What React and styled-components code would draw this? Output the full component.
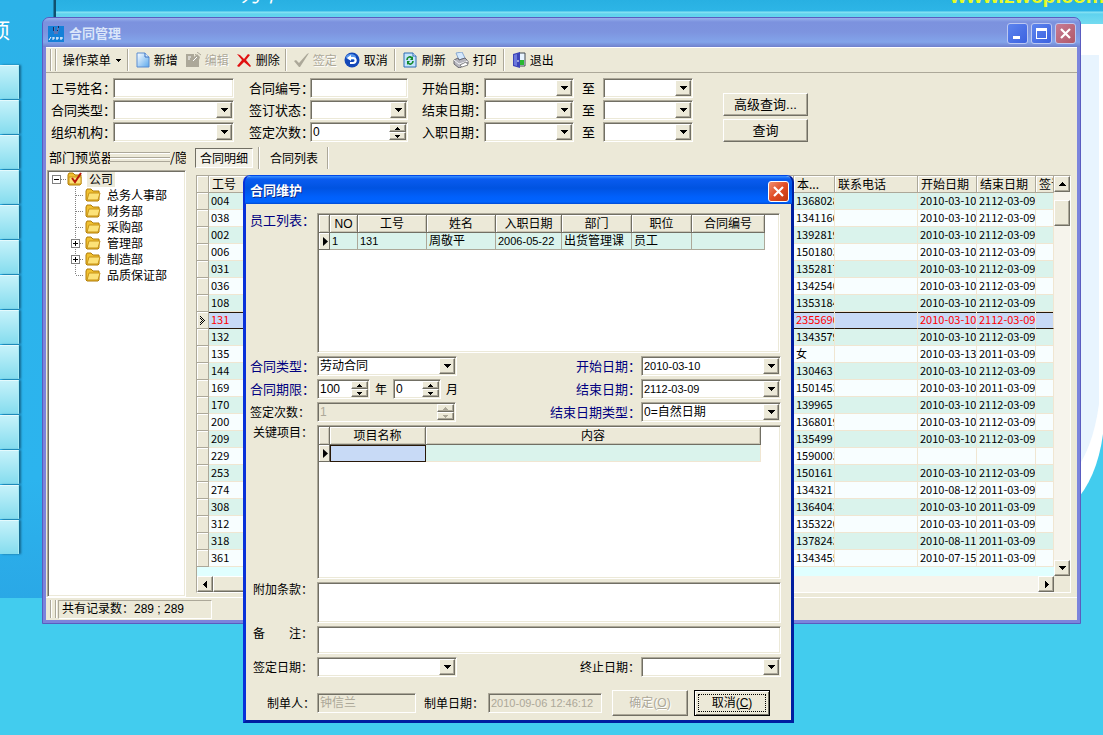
import React from "react";
import styled, { createGlobalStyle, css } from "styled-components";

const face = "#ece9d8";
const cjk = '"Noto Sans CJK SC", sans-serif';
const mixed = '"Liberation Sans", "Noto Sans CJK SC", sans-serif';

const Global = createGlobalStyle`
  *, *::before, *::after { box-sizing: border-box; }
  html, body { margin: 0; padding: 0; }
  body { font-family: ${cjk}; font-size: 12px; line-height: 16px; color: #000; }
  button, input, select, textarea { font: inherit; color: inherit; margin: 0; padding: 0; border-radius: 0; }
  ul { list-style: none; margin: 0; padding: 0; }
`;

const raised = css`
  background: ${face};
  border: 1px solid;
  border-color: #fff #716f64 #716f64 #fff;
  box-shadow: inset -1px -1px #aca899;
`;

const sunken = css`
  background: #fff;
  padding: 1px;
  border: 1px solid;
  border-color: #aca899 #fff #fff #aca899;
  box-shadow: inset 1px 1px #716f64, inset -1px -1px ${face};
`;

/* ---------- desktop ---------- */

const Desktop = styled.div`
  position: relative;
  height: 100vh;
  overflow: hidden;
  background: #42ccee;
`;

const Banner = styled.header`
  display: flex;
  justify-content: space-between;
  height: 24px;
  padding-left: 57px;
  overflow: hidden;
  background: linear-gradient(#28b0e2 0, #2db5e6 11px, #8ce4f4 12px, #5fd2ee 14px, #72daf0 23px);
  white-space: nowrap;
`;

const BannerWord = styled.span`
  margin: -18px 0 0 184px;
  font-size: 20px;
  line-height: 24px;
  font-style: italic;
  color: #fff;
`;

const BannerLink = styled.a`
  width: 153px;
  flex: none;
  margin-top: -16px;
  font: 700 21px/24px "Liberation Sans", sans-serif;
  color: #e6fa28;
  text-decoration: none;
`;

const SideRail = styled.nav`
  position: absolute;
  left: 0;
  top: 0;
  width: 56px;
  height: 598px;
  overflow: hidden;
  background: linear-gradient(90deg, transparent 53px, #10506e 54px), linear-gradient(#2cb2e8, #2cb4ee 80%, #2aa8e6);
`;

const RailTitle = styled.div`
  width: 20px;
  margin: 14px 0 0 -11px;
  height: 51px;
  font-size: 21px;
  line-height: 30px;
  color: #fff;
`;

const RailItem = styled.div`
  width: 19px;
  height: 34px;
  margin-bottom: 1px;
  border-top: 1px solid #e4fafd;
  border-right: 1px solid #a8ecf6;
  background: linear-gradient(#c6f2fa, #84dcee);
  box-shadow: 2px 0 2px #14668c;
`;

const Sky = styled.svg`
  position: absolute;
  right: 0;
  top: 24px;
  width: 30px;
  height: 500px;
`;

/* ---------- window chrome ---------- */

const Window = styled.section`
  position: absolute;
  display: flex;
  flex-direction: column;
  border-radius: 7px 7px 0 0;
  ${(p) =>
    p.$active
      ? css`
          left: 243px;
          right: 309px;
          top: 175px;
          border: 3px solid;
          border-color: #0048e8 #001ea0 #001ea0 #0831d9;
          border-top-width: 1px;
          background: ${face};
        `
      : css`
          left: 42px;
          right: 22px;
          top: 17px;
          border: 1px solid #5a5cc0;
          padding: 0 3px 3px;
          background: #7b84dc;
        `}
`;

const TitleBar = styled.div`
  display: flex;
  align-items: center;
  height: ${(p) => (p.$active ? 28 : 29)}px;
  gap: 3px;
  border-radius: 6px 6px 0 0;
  margin: 0 ${(p) => (p.$active ? -1 : -3)}px;
  padding: 2px ${(p) => (p.$active ? 3 : 4)}px 0 5px;
  background: ${(p) =>
    p.$active
      ? "linear-gradient(#3a90ff 0, #0a5cf0 3px, #0053e1 12px, #0060fc 21px, #0064ff 26px, #0048d0 28px)"
      : "linear-gradient(#98b0ec 0, #7c92de 4px, #7d94df 14px, #82a4ea 24px, #7080cc 29px)"};
`;

const TitleText = styled.h1`
  flex: 1;
  margin: 0;
  padding-left: ${(p) => (p.$active ? 0 : 2)}px;
  font-size: 13px;
  line-height: 18px;
  padding-bottom: 2px;
  font-weight: 700;
  color: ${(p) => (p.$active ? "#fff" : "#dbe6fa")};
  text-shadow: ${(p) => (p.$active ? "1px 1px #0a2c8c" : "none")};
`;

const CaptionButton = styled.button`
  display: grid;
  place-items: center;
  width: 21px;
  height: 21px;
  border: 1px solid ${(p) => (p.$tone === "live" ? "#fff" : "#bcc8f2")};
  border-radius: 3px;
  background: ${(p) =>
    p.$tone === "live"
      ? "linear-gradient(135deg, #f09070, #e04c24 50%, #c03810)"
      : p.$tone === "close"
      ? "linear-gradient(135deg, #c87c94, #b05868)"
      : "linear-gradient(135deg, #5c84ee, #3c62e0)"};
`;

const CrossIcon = () => (
  <svg width="13" height="13" viewBox="0 0 13 13" aria-hidden="true">
    <path d="M2 2L11 11M11 2L2 11" stroke="#fff" strokeWidth="2.2" />
  </svg>
);

/* ---------- toolbar ---------- */

const Toolbar = styled.div`
  display: flex;
  align-items: center;
  height: 26px;
  padding: 0 4px;
  background: ${face};
  border-top: 1px solid #fff;
  border-bottom: 1px solid #aca899;
`;

const Grip = styled.span`
  width: 6px;
  height: ${(p) => p.$h}px;
  flex: none;
  border: solid #aca899;
  border-width: 0 1px;
  box-shadow: inset 1px 0 #fff, 1px 0 #fff;
`;

const ToolButton = styled.button`
  display: flex;
  align-items: center;
  gap: ${(p) => p.$gap || 4}px;
  padding: 0 3px 0 4px;
  border: 0;
  background: none;
  white-space: nowrap;
  line-height: 14px;
  color: ${(p) => (p.disabled ? "#aca899" : "#000")};
  text-shadow: ${(p) => (p.disabled ? "1px 1px #fff" : "none")};
`;

const Divider = styled.span`
  width: 2px;
  height: 22px;
  margin: 0 ${(p) => p.$m}px;
  flex: none;
  border-left: 1px solid #aca899;
  border-right: 1px solid #fff;
`;

/* ---------- fields ---------- */

const FieldBox = styled.span`
  display: flex;
  height: 20px;
  width: ${(p) => (p.$w ? p.$w + "px" : "100%")};
  flex: none;
  ${sunken}
  ${(p) => p.$off && css`background: ${face}; color: #aca899;`}
`;

const bare = css`
  appearance: none;
  flex: 1;
  min-width: 0;
  width: 100%;
  height: 16px;
  border: 0;
  outline: 0;
  background: none;
  padding: 0 1px;
  font-family: ${mixed};
  font-size: ${(p) => p.$size || 12}px;
  line-height: 16px;
`;
const BareInput = styled.input`
  ${bare}
  &:disabled { color: #aca899; }
`;
const BareSelect = styled.select`${bare}`;

const ArrowBox = styled.span`
  display: grid;
  place-items: center;
  width: 16px;
  height: 16px;
  flex: none;
  ${raised}
`;

const SpinBox = styled.span`
  display: grid;
  grid-template-rows: 8px 8px;
  width: 17px;
  flex: none;
`;

const SpinButton = styled.button`
  display: grid;
  place-items: center;
  width: 17px;
  height: 8px;
  ${raised}
`;

const ARROWS = { down: "M0 0h7L3.5 4z", up: "M0 4h7L3.5 0z", left: "M5 0v7L1 3.5z", right: "M2 0v7l4-3.5z" };
const Arrow = ({ dir = "down", w = 7, h, color = "#000" }) => {
  const sideways = dir === "left" || dir === "right";
  return (
    <svg width={w} height={h || (sideways ? 7 : 4)} viewBox={sideways ? "0 0 7 7" : "0 0 7 4"} aria-hidden="true">
      <path d={ARROWS[dir]} fill={color} shapeRendering="crispEdges" />
    </svg>
  );
};

const Combo = ({ id, w, value = "", size, label }) => (
  <FieldBox $w={w}>
    <BareSelect id={id} aria-label={label} $size={size} defaultValue={value}>
      <option value={value}>{value}</option>
    </BareSelect>
    <ArrowBox>
      <Arrow />
    </ArrowBox>
  </FieldBox>
);

const Spinner = ({ id, w, value, disabled }) => (
  <FieldBox $w={w} $off={disabled}>
    <BareInput id={id} defaultValue={value} disabled={disabled} />
    <SpinBox>
      <SpinButton type="button" aria-label="+" disabled={disabled}>
        <Arrow dir="up" w={5} h={3} color={disabled ? "#aca899" : "#000"} />
      </SpinButton>
      <SpinButton type="button" aria-label="-" disabled={disabled}>
        <Arrow w={5} h={3} color={disabled ? "#aca899" : "#000"} />
      </SpinButton>
    </SpinBox>
  </FieldBox>
);

const TextField = ({ id, w, value, disabled, size }) => (
  <FieldBox $w={w} $off={disabled}>
    <BareInput id={id} defaultValue={value} disabled={disabled} $size={size} />
  </FieldBox>
);

const PushButton = styled.button`
  height: ${(p) => p.$h || 23}px;
  width: ${(p) => p.$w || 85}px;
  flex: none;
  font-size: ${(p) => p.$size || 13}px;
  font-family: ${mixed};
  line-height: 16px;
  ${raised}
  &:disabled { color: #aca899; text-shadow: 1px 1px #fff; }
  ${(p) =>
    p.$focused &&
    css`
      border-color: #000;
      box-shadow: inset 1px 1px #fff, inset -1px -1px #716f64;
      outline: 1px dotted #000;
      outline-offset: -5px;
    `}
`;

/* ---------- filter area ---------- */

const FilterPanel = styled.form`
  display: flex;
  height: 73px;
  padding: 5px 5px 0;
  background: ${face};
`;

const FilterGroup = styled.div`
  display: grid;
  grid-template-columns: ${(p) => p.$cols};
  grid-auto-rows: 20px;
  row-gap: 2px;
  align-content: start;
  align-items: center;
  margin-right: ${(p) => p.$mr || 0}px;
`;

const FilterLabel = styled.label`
  font-size: 13px;
  line-height: 20px;
  white-space: nowrap;
  text-align: ${(p) => (p.$center ? "center" : "left")};
`;

const FilterActions = styled.div`
  display: flex;
  flex-direction: column;
  gap: 3px;
  padding-top: 15px;
`;

/* ---------- work area ---------- */

const WorkArea = styled.div`
  display: flex;
  background: ${face};
`;

const LeftPane = styled.aside`
  width: 140px;
  flex: none;
  display: flex;
  flex-direction: column;
`;

const PaneHead = styled.div`
  display: flex;
  align-items: center;
  height: 24px;
  padding: 0 0 2px 3px;
  font-size: 13px;
  white-space: nowrap;
`;

const Clip = styled.span`
  width: ${(p) => p.$w}px;
  overflow: hidden;
  flex: none;
`;

const DoubleBar = styled.span`
  width: 60px;
  height: 10px;
  flex: none;
  border: solid #aca899;
  border-width: 1px 0;
  background: linear-gradient(#fff 1px, transparent 1px 4px, #aca899 4px 5px, #fff 5px 6px, transparent 6px);
`;

const TreeBox = styled.div`
  flex: 1;
  margin-left: 1px;
  ${sunken}
  padding: 0 1px;
`;

const TreeRow = styled.li`
  display: flex;
  align-items: center;
  height: 16px;
`;

const TreeStem = styled.span`
  display: flex;
  align-items: center;
  height: 16px;
  flex: none;
  width: ${(p) => (p.$root ? 18 : 36)}px;
  padding-left: ${(p) => (p.$root ? 3 : 22)}px;
  background:
    repeating-linear-gradient(90deg, #808080 0 1px, transparent 1px 2px) ${(p) => (p.$root ? 12 : 27)}px 8px / 8px 1px no-repeat,
    repeating-linear-gradient(#808080 0 1px, transparent 1px 2px) 26px 0 / 1px ${(p) => (p.$root ? 0 : p.$last ? 8 : 16)}px no-repeat;
`;

const Toggle = styled.button`
  display: grid;
  place-items: center;
  width: 9px;
  height: 9px;
  border: 1px solid #808080;
  background: #fff;
`;

const TreeText = styled.span`
  height: 15px;
  margin-left: 4px;
  padding: 0 2px;
  line-height: 14px;
  background: ${(p) => (p.$lit ? face : "none")};
`;

const RightPane = styled.div`
  flex: 1;
  min-width: 0;
  padding: 0 6px 4px 10px;
`;

const Tabs = styled.div`
  display: flex;
  align-items: center;
  height: 29px;
  padding-bottom: 5px;
  margin-left: -1px;
`;

const Tab = styled.button`
  height: 20px;
  width: 58px;
  border: 1px solid transparent;
  background: none;
  line-height: 16px;
  ${(p) =>
    p.$on &&
    css`
      border-color: #716f64 #fff #fff #716f64;
      background: #f4f2e8;
    `}
`;

const GridFrame = styled.div`
  display: grid;
  grid-template-columns: minmax(0, 1fr) 16px;
  grid-template-rows: auto 16px;
  border: 1px solid;
  border-color: #aca899 #fff #fff #aca899;
`;

const GridBody = styled.div`
  padding-bottom: 9px;
  background: #e0ffff;
`;

const RecordTable = styled.table`
  width: 100%;
  table-layout: fixed;
  border-collapse: separate;
  border-spacing: 0;
  font-size: 11px;
  line-height: 14px;
`;

const RecordHead = styled.th`
  height: 17px;
  padding: 0 0 0 3px;
  text-align: left;
  font-size: 12px;
  font-weight: 400;
  white-space: nowrap;
  overflow: hidden;
  background: ${face};
  border-right: 1px solid #aca899;
  border-bottom: 1px solid #aca899;
  box-shadow: inset 1px 1px #fff;
`;

const RecordRow = styled.tr`
  background: ${(p) => (p.$sel ? "#c8daf6" : p.$odd ? "#f8feff" : "#daf3ec")};
  color: ${(p) => (p.$sel ? "#f00" : "#000")};
  td {
    height: 17px;
    padding: 0 0 2px 2px;
    vertical-align: top;
    white-space: nowrap;
    overflow: hidden;
    border-right: 1px solid #f0e6d2;
    border-bottom: 1px solid ${(p) => (p.$sel ? "#281808" : "#f0e6d2")};
    box-shadow: ${(p) => (p.$sel ? "inset 0 1px #281808" : "none")};
  }
  td:first-child {
    background: ${face};
    border-right: 1px solid #aca899;
    border-bottom: 1px solid #aca899;
    box-shadow: inset 1px 1px #fff;
    padding: 0 0 0 3px;
    vertical-align: middle;
    line-height: 8px;
  }
`;

const VScroll = styled.div`
  display: flex;
  flex-direction: column;
  justify-content: space-between;
  background: #f6f4ec;
`;

const VThumb = styled.span`
  height: 26px;
  margin: 8px 0 auto;
  ${raised}
`;

const HScroll = styled.div`
  display: flex;
  justify-content: space-between;
  background: #f6f4ec;
`;

const HThumb = styled.span`
  width: 60px;
  margin-right: auto;
  ${raised}
`;

const StatusBar = styled.footer`
  display: flex;
  align-items: center;
  height: 23px;
  padding-left: 4px;
  gap: 2px;
  background: ${face};
  border-top: 1px solid #fff;
`;

const StatusCell = styled.span`
  width: 154px;
  height: 19px;
  padding-left: 3px;
  border: 1px solid;
  border-color: #aca899 #fff #fff #aca899;
  font-family: ${mixed};
  line-height: 17px;
`;

/* ---------- dialog ---------- */

const DialogBody = styled.form`
  display: flex;
  flex-direction: column;
  gap: 3px;
  padding: 9px 10px 4px 4px;
`;

const Line = styled.div`
  display: flex;
  align-items: ${(p) => p.$align || "center"};
  min-height: 20px;
`;

const DialogLabel = styled.label`
  width: 67px;
  flex: none;
  white-space: nowrap;
  font-size: ${(p) => (p.$key ? 13 : 12)}px;
  line-height: 14px;
  color: ${(p) => (p.$key ? "#000080" : "#000")};
  padding-left: ${(p) => p.$indent || 0}px;
`;

const EndLabel = styled(DialogLabel)`
  width: auto;
  margin-left: auto;
  padding-right: ${(p) => (p.$key ? 0 : 1)}px;
`;

const Unit = styled.span`
  padding: 0 6px 0 5px;
`;

const SheetBox = styled.div`
  flex: 1;
  min-width: 0;
  height: ${(p) => p.$h}px;
  margin-right: ${(p) => p.$mr || 0}px;
  ${sunken}
`;

const Sheet = styled.table`
  table-layout: fixed;
  border-collapse: separate;
  border-spacing: 0;
  width: ${(p) => p.$w}px;
  font-family: ${mixed};
  line-height: 14px;
  th {
    height: 18px;
    padding: 0;
    font-weight: 400;
    white-space: nowrap;
    background: ${face};
    border-right: 1px solid #716f64;
    border-bottom: 1px solid #716f64;
    box-shadow: inset 1px 1px #fff, inset -1px -1px #c9c5b4;
  }
  td {
    height: 17px;
    padding: 0 0 0 2px;
    white-space: nowrap;
    overflow: hidden;
    background: #daf3ec;
    border-right: 1px solid #aca899;
    border-bottom: 1px solid #aca899;
  }
  td:first-child {
    background: ${face};
    padding-left: 3px;
    line-height: 8px;
    box-shadow: inset 1px 1px #fff;
    border-color: #716f64;
  }
`;

const DateCell = styled.td`
  font-size: 11px;
`;

const ActiveCell = styled.td`
  && {
    background: #c8daf6;
    border: 1px solid #281808;
  }
`;

const WideCell = styled.td`
  && {
    border-color: #f0e6d2;
  }
`;

const Note = styled.textarea`
  flex: 1;
  display: block;
  resize: none;
  outline: 0;
  height: ${(p) => p.$h}px;
  ${sunken}
`;

const FootLine = styled.div`
  display: flex;
  align-items: center;
  height: 26px;
  margin-top: 10px;
`;

const Spacer = styled.span`
  width: 5px;
  flex: none;
`;

const Buttons = styled.div`
  display: flex;
  gap: 6px;
  margin-left: 10px;
`;

/* ---------- icons ---------- */

const Svg = ({ children, w = 16 }) => (
  <svg width={w} height="16" viewBox={`0 0 ${w} 16`} aria-hidden="true">
    {children}
  </svg>
);

const AppIcon = () => (
  <Svg>
    <rect width="16" height="16" fill="#1480d8" />
    <path d="M5 1h6v4l-1 1v2H6V6L5 5z" fill="#5c78b8" />
    <path d="M5 1h1v4H5zM10 0h1v2h-1zM9 4h1v1H9z" fill="#182c60" />
    <path d="M7 0h2v5H7z" fill="#1480d8" />
    <path d="M1 14l2-3M5 11v3M5 12h2M9 11v3M8 12h3M13 11v3M12 12h3" stroke="#fff" fill="none" />
  </Svg>
);

const NewIcon = () => (
  <Svg w={14}>
    <defs>
      <linearGradient id="doc" x1="0" y1="0" x2="1" y2="1">
        <stop offset="0" stopColor="#fff" />
        <stop offset="1" stopColor="#5aa8ec" />
      </linearGradient>
    </defs>
    <path d="M1 1h8l4 4v10H1z" fill="url(#doc)" stroke="#5a8cd0" />
    <path d="M9 1v4h4" fill="#d8ecff" stroke="#3a70c0" />
  </Svg>
);

const EditIcon = () => (
  <Svg>
    <path d="M1 2h8v3l3-3 3 3-1 3v7H1z" fill="#aca899" />
    <path d="M12 0l4 3M10 2l4 4" stroke="#aca899" />
    <path d="M3 5h3M3 7h2M8 9l4-4" stroke="#fff" />
  </Svg>
);

const DeleteIcon = () => (
  <Svg>
    <path d="M1 2l3 1 4 4 4-5 2 1-4 5 5 6-1 1-6-5-5 5-2-1 5-6z" fill="#e01010" />
  </Svg>
);

const SignIcon = () => (
  <Svg>
    <path d="M1 9l2-1 3 3 8-9 2-1-9 14H6z" fill="#aca899" />
  </Svg>
);

const UndoIcon = () => (
  <Svg>
    <circle cx="8" cy="8" r="7.5" fill="#1448b8" />
    <ellipse cx="7" cy="5" rx="5" ry="3" fill="#5a98ec" />
    <path d="M3 6l4-3v2h2c5 0 5 7 0 7H6v-2h3c2 0 2-3 0-3H7v2z" fill="#fff" />
  </Svg>
);

const RefreshIcon = () => (
  <Svg w={14}>
    <path d="M1 1h9l3 3v11H1z" fill="#c4e4fc" stroke="#2c6cb4" />
    <path d="M10 1v3h3" fill="#fff" stroke="#2c6cb4" />
    <path d="M4 8c0-3 3-4 5-2M10 9c0 3-3 4-5 2" stroke="#108828" strokeWidth="1.6" fill="none" />
    <path d="M10 4v4H7zM4 13V9h3z" fill="#108828" />
  </Svg>
);

const PrintIcon = () => (
  <Svg>
    <path d="M3 1l6-1 3 6-6 2z" fill="#d4e8fc" stroke="#88a8d0" />
    <path d="M1 8l4-2 1 2 6-2 3 3v3l-9 4-5-4z" fill="#b4b4bc" stroke="#686870" />
    <path d="M1 8l5 4 9-3" stroke="#f4f4f8" fill="none" />
    <path d="M7 13l6-3 2 3-6 2z" fill="#fff" stroke="#888" />
  </Svg>
);

const ExitIcon = () => (
  <Svg w={14}>
    <path d="M7 1h6v13H7z" fill="#e8f4ff" stroke="#404850" />
    <path d="M8 8h4v5H8z" fill="#28b830" />
    <path d="M1 2l7-2v16l-7-2z" fill="#3c44b8" />
    <path d="M2 3l3-1v12l-3-1z" fill="#6c78dc" />
    <path d="M6 8v2" stroke="#fff" />
  </Svg>
);

const FolderIcon = ({ checked }) => (
  <Svg>
    <path d="M1 4l1-2h4l2 2h6v9l-1 1H2l-1-1z" fill="#f0c030" stroke="#b07c08" />
    <path d={checked ? "M2 6h12v7H2z" : "M4 6h11l-2 7H2z"} fill="#fce278" stroke="#c89418" />
    {checked && <path d="M5 7l3 4 6-9" stroke="#b81808" strokeWidth="2" fill="none" />}
  </Svg>
);

const Pointer = ({ hollow }) =>
  hollow ? (
    <svg width="6" height="9" viewBox="0 0 6 9" shapeRendering="crispEdges" aria-hidden="true">
      <path d="M0 0h1v1H0zM0 2h1v1H0zM0 6h1v1H0zM0 8h1v1H0zM1 1h1v1H1zM2 2h1v1H2zM3 3h1v1H3zM4 4h1v1H4zM3 5h1v1H3zM2 6h1v1H2zM1 7h1v1H1zM2 4h1v1H2zM1 3h1v1H1zM1 5h1v1H1z" />
    </svg>
  ) : (
    <svg width="6" height="9" viewBox="0 0 6 9" aria-hidden="true">
      <path d="M1 0v9l5-4.5z" />
    </svg>
  );

/* ---------- data ---------- */

const S = "2010-03-10";
const E = "2112-03-09";
const F = "2011-03-09";
const RECORDS = [
  ["004", "1368028", S, E],
  ["038", "1341160", S, E],
  ["002", "1392819", S, E],
  ["006", "1501803", S, E],
  ["031", "1352817", S, E],
  ["036", "1342540", S, E],
  ["108", "1353184", S, E],
  ["131", "2355690", S, E],
  ["132", "1343579", S, E],
  ["135", "女", "2010-03-13", F],
  ["144", "130463", S, E],
  ["169", "1501453", S, F],
  ["170", "139965", S, E],
  ["200", "1368019", S, E],
  ["209", "135499", S, E],
  ["229", "1590003", "", ""],
  ["253", "150161", S, E],
  ["274", "134321", "2010-08-12", F],
  ["308", "1364043", S, F],
  ["312", "1353220", S, F],
  ["318", "1378243", "2010-08-11", F],
  ["361", "1343455", "2010-07-15", F],
];

const DEPARTMENTS = [
  { name: "总务人事部" },
  { name: "财务部" },
  { name: "采购部" },
  { name: "管理部", more: true },
  { name: "制造部", more: true },
  { name: "品质保证部" },
];

const DATE_FILTERS = ["开始日期", "结束日期", "入职日期"];

const Plus = ({ open }) => (
  <svg width="7" height="7" viewBox="0 0 7 7" aria-hidden="true">
    <path d={open ? "M1 3.5h5" : "M1 3.5h5M3.5 1v5"} stroke="#000" />
  </svg>
);

/* ---------- sections ---------- */

function MainToolbar() {
  return (
    <Toolbar role="toolbar">
      <Grip $h={22} />
      <ToolButton type="button" $gap={5}>
        <span>&nbsp;操作菜单</span>
        <Arrow w={5} h={3} />
      </ToolButton>
      <Divider $m={3} />
      <ToolButton type="button"><NewIcon />新增</ToolButton>
      <ToolButton type="button" disabled><EditIcon />编辑</ToolButton>
      <ToolButton type="button"><DeleteIcon />删除</ToolButton>
      <Divider $m={2} />
      <ToolButton type="button" disabled><SignIcon />签定</ToolButton>
      <ToolButton type="button"><UndoIcon />取消</ToolButton>
      <Divider $m={3} />
      <ToolButton type="button" $gap={5}><RefreshIcon />刷新</ToolButton>
      <ToolButton type="button"><PrintIcon />打印</ToolButton>
      <Divider $m={3} />
      <ToolButton type="button"><ExitIcon />退出</ToolButton>
    </Toolbar>
  );
}

function Filters() {
  return (
    <FilterPanel>
      <FilterGroup $cols="62px 121px" $mr={15}>
        <FilterLabel htmlFor="f-name">工号姓名：</FilterLabel>
        <TextField id="f-name" />
        <FilterLabel htmlFor="f-type">合同类型：</FilterLabel>
        <Combo id="f-type" />
        <FilterLabel htmlFor="f-org">组织机构：</FilterLabel>
        <Combo id="f-org" />
      </FilterGroup>
      <FilterGroup $cols="61px 98px" $mr={14}>
        <FilterLabel htmlFor="f-no">合同编号：</FilterLabel>
        <TextField id="f-no" />
        <FilterLabel htmlFor="f-state">签订状态：</FilterLabel>
        <Combo id="f-state" />
        <FilterLabel htmlFor="f-count">签定次数：</FilterLabel>
        <Spinner id="f-count" value="0" />
      </FilterGroup>
      <FilterGroup $cols="62px 90px 29px 90px" $mr={30}>
        {DATE_FILTERS.map((name, i) => (
          <React.Fragment key={name}>
            <FilterLabel htmlFor={"f-from" + i}>{name}：</FilterLabel>
            <Combo id={"f-from" + i} />
            <FilterLabel $center htmlFor={"f-to" + i}>至</FilterLabel>
            <Combo id={"f-to" + i} />
          </React.Fragment>
        ))}
      </FilterGroup>
      <FilterActions>
        <PushButton type="button">高级查询...</PushButton>
        <PushButton type="button">查询</PushButton>
      </FilterActions>
    </FilterPanel>
  );
}

function DepartmentTree() {
  return (
    <LeftPane>
      <PaneHead>
        <Clip $w={61}>部门预览器</Clip>
        <DoubleBar />
        <Clip $w={16}>/隐藏</Clip>
      </PaneHead>
      <TreeBox>
        <ul>
          <TreeRow>
            <TreeStem $root>
              <Toggle type="button" aria-label="公司"><Plus open /></Toggle>
            </TreeStem>
            <FolderIcon checked />
            <TreeText $lit>公司</TreeText>
          </TreeRow>
          {DEPARTMENTS.map((d, i) => (
            <TreeRow key={d.name}>
              <TreeStem $last={i === DEPARTMENTS.length - 1}>
                {d.more && <Toggle type="button" aria-label={d.name}><Plus /></Toggle>}
              </TreeStem>
              <FolderIcon />
              <TreeText>{d.name}</TreeText>
            </TreeRow>
          ))}
        </ul>
      </TreeBox>
    </LeftPane>
  );
}

function Records() {
  return (
    <RightPane>
      <Tabs>
        <Tab type="button" $on>合同明细</Tab>
        <Divider $m={5} />
        <Tab type="button">合同列表</Tab>
        <Divider $m={4} />
      </Tabs>
      <GridFrame>
        <GridBody>
          <RecordTable>
            <colgroup>
              <col width="12" />
              <col width="60" />
              <col />
              <col width="41" />
              <col width="83" />
              <col width="59" />
              <col width="59" />
              <col width="18" />
            </colgroup>
            <thead>
              <tr>
                <RecordHead />
                <RecordHead>工号</RecordHead>
                <RecordHead />
                <RecordHead>本...</RecordHead>
                <RecordHead>联系电话</RecordHead>
                <RecordHead>开始日期</RecordHead>
                <RecordHead>结束日期</RecordHead>
                <RecordHead>签订</RecordHead>
              </tr>
            </thead>
            <tbody>
              {RECORDS.map(([no, phone, start, end], i) => (
                <RecordRow key={no} $odd={i % 2 === 1} $sel={no === "131"}>
                  <td>{no === "131" && <Pointer hollow />}</td>
                  <td>{no}</td>
                  <td />
                  <td>{phone}</td>
                  <td />
                  <td>{start}</td>
                  <td>{end}</td>
                  <td />
                </RecordRow>
              ))}
            </tbody>
          </RecordTable>
        </GridBody>
        <VScroll>
          <ArrowBox><Arrow dir="up" /></ArrowBox>
          <VThumb />
          <ArrowBox><Arrow /></ArrowBox>
        </VScroll>
        <HScroll>
          <ArrowBox><Arrow dir="left" /></ArrowBox>
          <HThumb />
          <ArrowBox><Arrow dir="right" /></ArrowBox>
        </HScroll>
      </GridFrame>
    </RightPane>
  );
}

function ContractDialog() {
  return (
    <Window $active role="dialog" aria-label="合同维护">
      <TitleBar $active>
        <TitleText $active as="h2">合同维护</TitleText>
        <CaptionButton type="button" $tone="live" aria-label="关闭"><CrossIcon /></CaptionButton>
      </TitleBar>
      <DialogBody>
        <Line $align="flex-start">
          <DialogLabel as="span" $key>员工列表：</DialogLabel>
          <SheetBox $h={140} $mr={1}>
            <Sheet $w={446}>
              <colgroup>
                <col width="11" /><col width="28" /><col width="69" /><col width="69" />
                <col width="66" /><col width="70" /><col width="60" /><col width="73" />
              </colgroup>
              <thead>
                <tr>
                  <th /><th>NO</th><th>工号</th><th>姓名</th><th>入职日期</th><th>部门</th><th>职位</th><th>合同编号</th>
                </tr>
              </thead>
              <tbody>
                <tr>
                  <td><Pointer /></td>
                  <DateCell>1</DateCell>
                  <DateCell>131</DateCell>
                  <td>周敬平</td>
                  <DateCell>2006-05-22</DateCell>
                  <td>出货管理课</td>
                  <td>员工</td>
                  <td />
                </tr>
              </tbody>
            </Sheet>
          </SheetBox>
        </Line>
        <Line>
          <DialogLabel $key htmlFor="d-type">合同类型：</DialogLabel>
          <Combo id="d-type" w={140} value="劳动合同" />
          <EndLabel $key htmlFor="d-start">开始日期：</EndLabel>
          <Combo id="d-start" w={140} value="2010-03-10" size={11} />
        </Line>
        <Line>
          <DialogLabel $key htmlFor="d-years">合同期限：</DialogLabel>
          <Spinner id="d-years" w={53} value="100" />
          <Unit>年</Unit>
          <Spinner id="d-months" w={48} value="0" />
          <Unit>月</Unit>
          <EndLabel $key htmlFor="d-end">结束日期：</EndLabel>
          <Combo id="d-end" w={140} value="2112-03-09" size={11} />
        </Line>
        <Line>
          <DialogLabel htmlFor="d-count">签定次数：</DialogLabel>
          <Spinner id="d-count" w={139} value="1" disabled />
          <EndLabel $key htmlFor="d-endtype">结束日期类型：</EndLabel>
          <Combo id="d-endtype" w={140} value="0=自然日期" />
        </Line>
        <Line $align="flex-start">
          <DialogLabel as="span" $indent={3}>关键项目：</DialogLabel>
          <SheetBox $h={154}>
            <Sheet $w={442}>
              <colgroup>
                <col width="11" /><col width="96" /><col width="335" />
              </colgroup>
              <thead>
                <tr><th /><th>项目名称</th><th>内容</th></tr>
              </thead>
              <tbody>
                <tr>
                  <td><Pointer /></td>
                  <ActiveCell />
                  <WideCell />
                </tr>
              </tbody>
            </Sheet>
          </SheetBox>
        </Line>
        <Line $align="flex-start">
          <DialogLabel htmlFor="d-terms" $indent={3}>附加条款：</DialogLabel>
          <Note id="d-terms" $h={41} />
        </Line>
        <Line $align="flex-start">
          <DialogLabel htmlFor="d-note" $indent={3}>备　　注：</DialogLabel>
          <Note id="d-note" $h={28} />
        </Line>
        <Line>
          <DialogLabel htmlFor="d-signed" $indent={3}>签定日期：</DialogLabel>
          <Combo id="d-signed" w={140} />
          <EndLabel htmlFor="d-stop">终止日期：</EndLabel>
          <Combo id="d-stop" w={140} />
        </Line>
        <FootLine>
          <DialogLabel htmlFor="d-author" $indent={17}>制单人：</DialogLabel>
          <TextField id="d-author" w={99} value="钟信兰" disabled />
          <DialogLabel htmlFor="d-made" $indent={8}>制单日期：</DialogLabel>
          <Spacer />
          <TextField id="d-made" w={114} value="2010-09-06 12:46:12" disabled size={11} />
          <Buttons>
            <PushButton type="button" $h={26} $w={76} $size={12} disabled>
              确定(<u>O</u>)
            </PushButton>
            <PushButton type="button" $h={26} $w={76} $size={12} $focused>
              取消(<u>C</u>)
            </PushButton>
          </Buttons>
        </FootLine>
      </DialogBody>
    </Window>
  );
}

export default function App() {
  return (
    <Desktop>
      <Global />
      <Banner>
        <BannerWord>为中</BannerWord>
        <BannerLink href="#">www.zwcp.com</BannerLink>
      </Banner>
      <Sky viewBox="0 0 30 500" preserveAspectRatio="none" aria-hidden="true">
        <path d="M0 0H30V410Q24 455 0 480z" fill="#fff" />
        <path d="M0 31H26V380Q20 425 0 450z" fill="#e8f4fe" />
      </Sky>
      <SideRail>
        <RailTitle>项</RailTitle>
        {Array.from({ length: 14 }, (_, i) => (
          <RailItem key={i} />
        ))}
      </SideRail>
      <Window>
        <TitleBar>
          <AppIcon />
          <TitleText>合同管理</TitleText>
          <CaptionButton type="button" aria-label="最小化">
            <svg width="13" height="13" viewBox="0 0 13 13" aria-hidden="true">
              <path d="M2 9h7v3H2z" fill="#fff" />
            </svg>
          </CaptionButton>
          <CaptionButton type="button" aria-label="最大化">
            <svg width="13" height="13" viewBox="0 0 13 13" aria-hidden="true">
              <path d="M1 1h11v11H1zM2 4v7h9V4z" fill="#fff" fillRule="evenodd" />
            </svg>
          </CaptionButton>
          <CaptionButton type="button" $tone="close" aria-label="关闭"><CrossIcon /></CaptionButton>
        </TitleBar>
        <MainToolbar />
        <Filters />
        <WorkArea>
          <DepartmentTree />
          <Records />
        </WorkArea>
        <StatusBar>
          <Grip $h={18} />
          <StatusCell>共有记录数：289 ; 289</StatusCell>
        </StatusBar>
      </Window>
      <ContractDialog />
    </Desktop>
  );
}
